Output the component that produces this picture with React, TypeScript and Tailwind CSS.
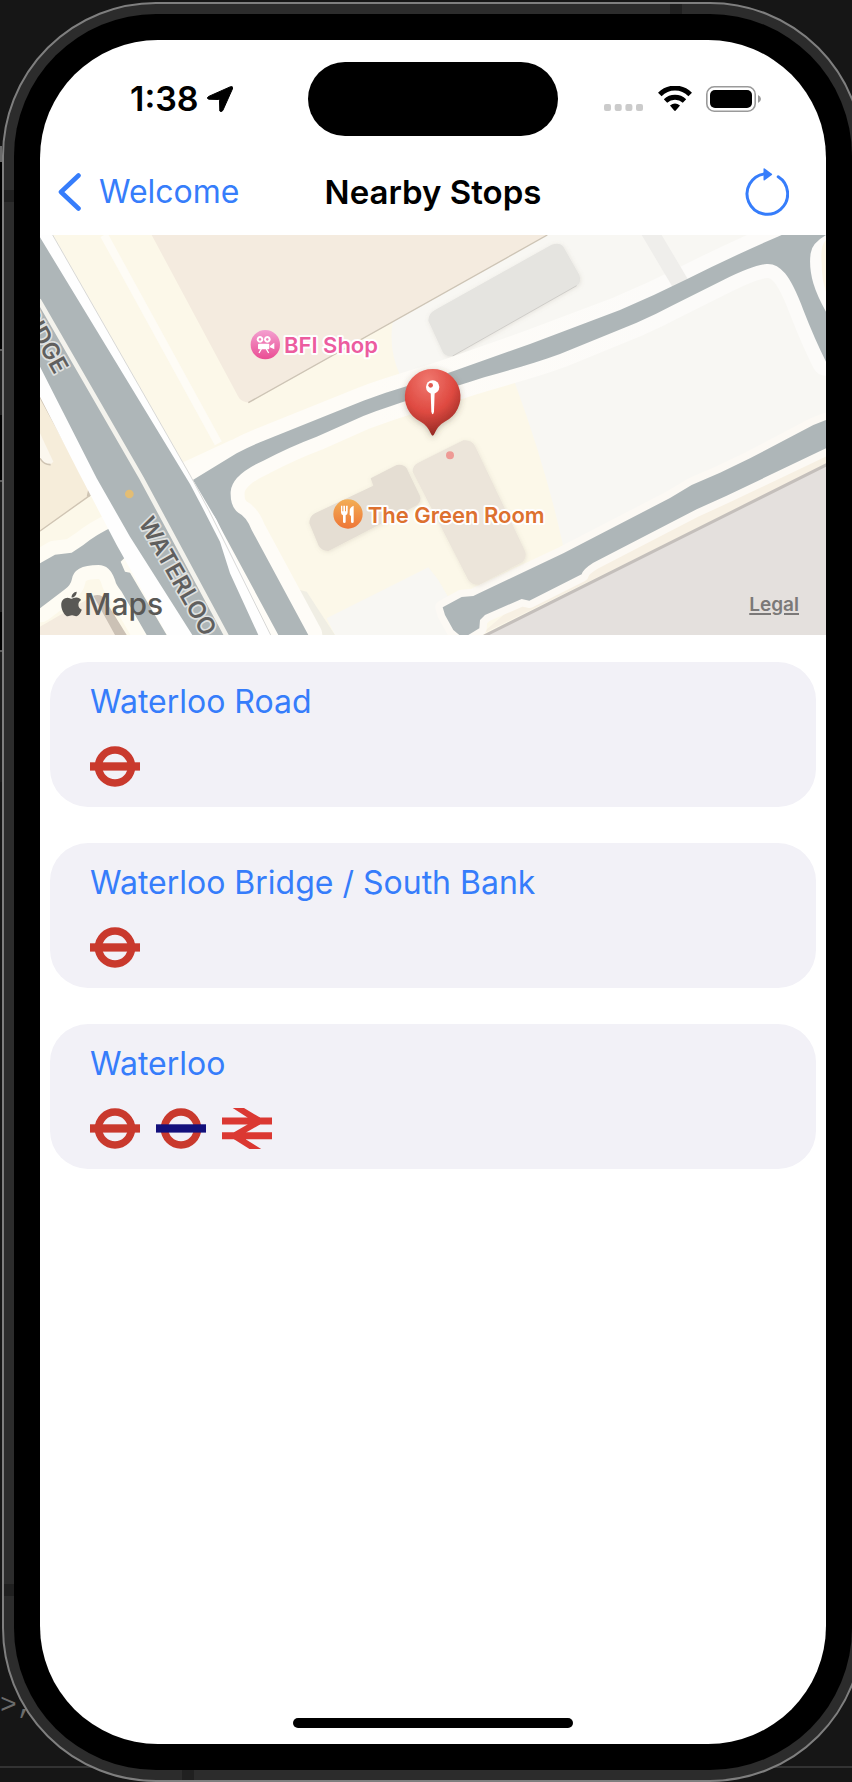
import { FaApple } from "react-icons/fa";

type Mode = "bus" | "tube" | "rail";

const stops: { name: string; modes: Mode[] }[] = [
  { name: "Waterloo Road", modes: ["bus"] },
  { name: "Waterloo Bridge / South Bank", modes: ["bus"] },
  { name: "Waterloo", modes: ["bus", "tube", "rail"] },
];

const modeLabels: Record<Mode, string> = {
  bus: "London Buses",
  tube: "London Underground",
  rail: "National Rail",
};

function ModeIcon({ mode }: { mode: Mode }) {
  return (
    <svg viewBox="0 0 50 41" className="h-[41px] w-[50px]" role="img" aria-label={modeLabels[mode]}>
      {mode === "rail" ? (
        <>
          <path d="M0 9.500h50v7H0zM0 24.300h50v7H0z" fill="#db3832" />
          <path d="M10.700 0H22L38 9.500v7L24 24.500v7L39.200 41H27.500L12 31.300v-7L25.500 16.500v-7z" fill="#db3832" />
        </>
      ) : (
        <>
          <circle cx="25" cy="20.500" r="16.500" fill="none" stroke="#c9392d" strokeWidth="7.500" />
          <rect x="0" y="16.300" width="50" height="8.300" fill={mode === "tube" ? "#13107c" : "#c9392d"} />
        </>
      )}
    </svg>
  );
}

function StatusBar() {
  return (
    <div className="grid grid-cols-[1fr_auto_1fr] items-center pt-[22px]">
      <div className="flex items-center gap-2 pl-[90px]">
        <span className="text-[34px] font-semibold leading-10">1:38</span>
        <svg viewBox="0 0 26 26" className="h-[26px] w-[26px]" aria-hidden="true">
          <path
            d="M1.500 10.500 23.500.700Q26.500 0 25.400 3L15.800 24.500Q14.500 26.500 12.800 25L12.500 14.500Q12.400 13.500 11.500 13.500L1.500 13.200Q-.800 12 1.500 10.500Z"
            fill="black"
            stroke="black"
            strokeWidth="1"
            strokeLinejoin="round"
          />
        </svg>
      </div>
      <div className="h-[74px] w-[250px] rounded-full bg-black" />
      <div className="flex items-center justify-end pr-[65px]">
        <svg viewBox="0 0 40 26" className="mr-[14px] h-[26px] w-[40px]" aria-hidden="true">
          <g fill="#cbcbcb">
            <rect x="0" y="18" width="7" height="7" rx="2" />
            <rect x="10.700" y="18" width="7" height="7" rx="2" />
            <rect x="21.400" y="18" width="7" height="7" rx="2" />
            <rect x="32" y="18" width="7" height="7" rx="2" />
          </g>
        </svg>
        <svg viewBox="0 0 34 26" className="mr-[14px] h-[26px] w-[34px]" aria-hidden="true">
          <path d="M1.800 8.400A21.500 21.500 0 0 1 32.200 8.400" fill="none" stroke="black" strokeWidth="5" />
          <path d="M7.500 15A14 14 0 0 1 26.500 15" fill="none" stroke="black" strokeWidth="5" />
          <path d="M12 19.500Q17 15.500 22 19.500L17.800 24.500Q17 25.300 16.200 24.500Z" fill="black" />
        </svg>
        <svg viewBox="0 0 55 26" className="h-[26px] w-[55px]" aria-hidden="true">
          <rect x=".800" y=".800" width="48.400" height="24.400" rx="7.500" fill="none" stroke="#9a9a9a" strokeWidth="1.600" />
          <rect x="4" y="4" width="42" height="18" rx="5" fill="black" />
          <path d="M52 9Q55 10.500 55 13T52 17Z" fill="#9a9a9a" />
        </svg>
      </div>
    </div>
  );
}

function NavBar() {
  return (
    <header className="mt-3 grid h-[87px] grid-cols-[1fr_auto_1fr] items-center">
      <a href="#welcome" className="flex items-center gap-[17px] pl-[18px] text-[#367dfb]">
        <svg viewBox="0 0 24 38" className="h-[38px] w-[24px]" aria-hidden="true">
          <path d="M20.500 2.500 3 19l17.500 16.500" fill="none" stroke="currentColor" strokeWidth="4.600" strokeLinecap="round" strokeLinejoin="round" />
        </svg>
        <span className="text-[32px] leading-10">Welcome</span>
      </a>
      <h1 className="text-[33px] font-semibold leading-10">Nearby Stops</h1>
      <button type="button" aria-label="Refresh" className="mr-[37px] justify-self-end text-[#367dfb]">
        <svg viewBox="0 0 44 48" className="block h-[48px] w-[44px]" aria-hidden="true">
          <path d="M33.200 8.800A20.300 20.300 0 1 1 20 5.800" fill="none" stroke="currentColor" strokeWidth="3" strokeLinecap="round" />
          <path d="M18.500 1Q18.500-.200 19.700.600L26.800 5.700Q27.600 6.300 26.800 7L19.700 12.200Q18.500 13 18.500 11.800Z" fill="currentColor" />
        </svg>
      </button>
    </header>
  );
}

const junctionRoad =
  "M480 755L620 670Q655 651 690 637L1000 512C1090 478 1180 455 1265 425L1500 342L1770 240Q1870 198 1970 148Q2100 82 2255 15L2388 15Q2345 40 2342 70Q2336 110 2350 160Q2362 200 2388 245L2388 395Q2355 330 2320 240Q2290 160 2265 130Q2240 100 2210 102Q2170 105 2080 150L1930 225Q1880 252 1820 278L1590 372C1490 410 1380 433 1290 465C1200 490 1100 520 1000 558L860 620Q780 650 700 692Q605 735 602 785Q600 830 625 848Q650 860 665 900L835 1215L745 1215L560 872Q545 840 520 838Z";
const westRoad =
  "M30 1000L75 974L125 968L160 945Q200 912 260 885L300 955L292 975L272 995L285 1025L300 1028L410 1215L350 1215L275 1085Q258 1065 255 1050Q240 1005 205 1005Q130 1005 125 1050Q122 1065 105 1078L30 1135Z";
const southRoad =
  "M2388 570L2350 585L2160 685L2070 728L1985 765L1920 804L1600 970L1350 1088L1330 1098L1295 1101L1238 1132L1245 1155L1270 1200L1288 1215L1315 1215L1348 1195L1350 1170L1365 1155L1475 1107L1498 1112L1655 1033Q1658 1018 1690 998L2000 838L2090 797L2388 655Z";

/** Street map drawn in units of a third of a pixel. */
function MapDrawing() {
  return (
    <svg
      viewBox="30 15 2358 1200"
      preserveAspectRatio="xMidYMid slice"
      className="block h-full w-full"
      fontFamily="Inter, 'Liberation Sans', sans-serif"
      role="img"
      aria-label="Map of the streets around Waterloo Bridge"
    >
      <defs>
        <linearGradient id="pink" x1="0" y1="0" x2="0" y2="1">
          <stop offset="0" stopColor="#f3a0d0" />
          <stop offset="1" stopColor="#ea4c93" />
        </linearGradient>
        <linearGradient id="orange" x1="0" y1="0" x2="0" y2="1">
          <stop offset="0" stopColor="#f3ae55" />
          <stop offset="1" stopColor="#ee7637" />
        </linearGradient>
        <linearGradient id="pavement" gradientUnits="userSpaceOnUse" x1="1000" y1="0" x2="1900" y2="0">
          <stop offset="0" stopColor="#fefcf7" />
          <stop offset="1" stopColor="#fcfbf9" />
        </linearGradient>
        <radialGradient id="pin" cx=".42" cy=".18" r=".85">
          <stop offset="0" stopColor="#f0786f" />
          <stop offset=".55" stopColor="#df4a41" />
          <stop offset="1" stopColor="#8e2620" />
        </radialGradient>
        <filter id="shade" x="-30%" y="-30%" width="160%" height="160%">
          <feDropShadow dx="0" dy="5" stdDeviation="9" floodColor="#4d4030" floodOpacity=".35" />
        </filter>
        <filter id="soft" x="-20%" y="-20%" width="140%" height="140%">
          <feDropShadow dx="2" dy="3" stdDeviation="7" floodColor="#8a8070" floodOpacity=".18" />
        </filter>
      </defs>

      {/* ground */}
      <rect x="30" y="15" width="2358" height="1200" fill="#fcf8e9" />
      <path d="M1088 275L1552 15H2388V650L1600 950Q1550 720 1455 460L1500 340L1110 435Q1075 360 1088 275Z" fill="#f8f7f3" />
      <path d="M890 1165L1195 1012L1225 1050L1320 1215H915Z" fill="#f8f7f3" />
      <path d="M790 1075L830 1085L915 1215H870Z" fill="#f0eee4" />
      <path d="M222 15L565 640M455 712L610 640" fill="none" stroke="#fefcf6" strokeWidth="24" />

      {/* north buildings */}
      <path d="M365 15L625 500Q632 515 658 518L1552 15Z" fill="#f4ebdf" />
      <path d="M655 518L1552 15" stroke="#cdc4b5" strokeWidth="4" />
      <path d="M1195 272Q1195 250 1215 240L1565 44Q1590 36 1600 50L1648 135Q1655 158 1640 167L1268 378Q1245 380 1238 365Z" fill="#e5e4e0" filter="url(#soft)" />
      <path d="M1640 167L1268 378" stroke="#cfcdc9" strokeWidth="3" />

      {/* pavements */}
      <path d={junctionRoad} fill="url(#pavement)" stroke="url(#pavement)" strokeWidth="84" strokeLinejoin="round" />
      <path d="M1835 15H1895L1975 150L1930 175Z" fill="#efeeeb" />
      <path d={westRoad} fill="#fefcf4" stroke="#fefcf4" strokeWidth="84" strokeLinejoin="round" />
      <path d="M1350 1215L1450 1130L2388 660V705Z" fill="#f7f0e3" />
      <path d={southRoad} fill="#fcf9f4" stroke="#fcf9f4" strokeWidth="44" strokeLinejoin="round" />
      <path d="M1365 1215L2388 705V1215Z" fill="#e4e0dd" />
      <path d="M1362 1218L2392 703" stroke="#c4bfbb" strokeWidth="9" />
      <path d="M2388 30Q2370 45 2375 100Q2375 150 2388 185Z" fill="#fbf5e5" />

      {/* west buildings */}
      <path d="M30 490L180 770L178 800L30 905Z" fill="#f6edda" />
      <path d="M30 498L180 772L174 800" fill="none" stroke="#cfc4b3" strokeWidth="8" />
      <path d="M30 903L205 778" stroke="#cfc4b3" strokeWidth="4" />
      <path d="M30 610L70 695L60 705Q45 705 30 685Z" fill="#fbf7ee" />
      <path d="M30 685Q42 705 62 704" fill="none" stroke="#cfc4b3" strokeWidth="5" />
      <path d="M30 1190L190 1097Q215 1090 225 1110L290 1215H30Z" fill="#f4ebdf" />
      <path d="M190 1097Q215 1090 225 1110L290 1215H255Z" fill="#cbc1b5" />

      {/* carriageways */}
      <path d={junctionRoad} fill="#aeb6b8" />
      <path d={westRoad} fill="#aeb6b8" />
      <path d={southRoad} fill="#aeb6b8" />

      {/* bridge */}
      <path d="M30 15H68L480 735L560 870L722 1215H412L260 945L150 735L30 500Z" fill="#fefefe" />
      <path d="M68 15L480 735L535 838L722 1215" fill="none" stroke="#d8d8d6" strokeWidth="3" />
      <path d="M30 22L480 762L520 838L570 935L600 1030L685 1215H487L300 920L200 745L30 410Z" fill="#aeb6b8" />
      <path d="M26 210L335 745L592 1222" fill="none" stroke="#f4f3ed" strokeWidth="14" />
      <circle cx="298" cy="792" r="13" fill="#e3bd74" />

      {/* south buildings */}
      <g filter="url(#soft)">
        <path d="M838 880Q838 858 855 850L1030 767L1022 745L1100 705Q1122 702 1130 715L1170 798Q1175 815 1162 825L895 963Q872 962 865 945Z" fill="#e5ded3" />
        <path d="M1148 725Q1148 705 1165 698L1300 631Q1325 628 1336 650L1486 965Q1490 985 1476 997L1348 1064Q1325 1065 1315 1050Z" fill="#ece5da" />
      </g>
      <circle cx="1260" cy="676" r="12" fill="#ee9a95" />

      {/* road names */}
      <g fontSize="71" fontWeight="600" fill="#605f5e" stroke="#dfe1e0" strokeWidth="10" strokeLinejoin="round" paintOrder="stroke">
        <text transform="translate(324 878) rotate(60.500)">WATERLOO</text>
        <text transform="translate(74 436) rotate(61)" textAnchor="end">BRIDGE</text>
      </g>

      {/* places */}
      <g fontSize="66" fontWeight="600" stroke="white" strokeWidth="12" strokeLinejoin="round" paintOrder="stroke">
        <text x="762" y="368" fill="#ec5c9f">BFI Shop</text>
        <text x="1013" y="878" fill="#dd7130">The Green Room</text>
      </g>
      <circle cx="706" cy="344" r="44" fill="url(#pink)" />
      <g fill="white">
        <path fillRule="evenodd" d="M690 318a10 10 0 1 0 .1 0zM690 324a4 4 0 1 1-.1 0zM712 318a10 10 0 1 0 .1 0zM712 324a4 4 0 1 1-.1 0z" />
        <rect x="684" y="341" width="34" height="17" rx="3" />
        <path d="M720 348L733 338V358L720 352Z" />
        <path d="M694 357L687 369M709 357L716 369" stroke="white" strokeWidth="4" />
      </g>
      <circle cx="954" cy="852" r="44" fill="url(#orange)" />
      <path
        d="M933 827h4v17h3v-17h5v17h3v-17h5v20q0 7-6 9v19q0 4-4 4t-4-4v-19q-6-2-6-9zM971 827v48q0 4-4 4t-4-4v-17l-4-3v-12q0-12 12-16z"
        fill="white"
      />

      {/* dropped pin */}
      <path
        d="M1208 417A83 83 0 0 1 1244 575Q1224 586 1214 610Q1208 624 1202 610Q1192 586 1172 575A83 83 0 0 1 1208 417Z"
        fill="url(#pin)"
        filter="url(#shade)"
      />
      <circle cx="1208" cy="471" r="20" fill="white" />
      <path d="M1202 486H1214L1212 545Q1208 560 1204 545Z" fill="white" />
      <circle cx="1202" cy="466" r="7" fill="#e25b52" />
    </svg>
  );
}

function NearbyMap() {
  return (
    <section aria-label="Map" className="relative h-[400px]">
      <MapDrawing />
      <div className="absolute bottom-[11px] left-[20px] flex items-center gap-px text-[#595855]">
        <FaApple className="h-[28px] w-[23px]" aria-hidden="true" />
        <span className="text-[30px] font-medium leading-10">Maps</span>
      </div>
      <a href="#legal" className="absolute bottom-[18px] right-[27px] text-[19px] font-semibold leading-6 text-[#7b7978] underline decoration-2 underline-offset-2">
        Legal
      </a>
    </section>
  );
}

/** Side buttons of the handset, seen as slivers beside its frame. */
function SideButtons() {
  return (
    <div className="flex w-[2px] shrink-0 flex-col" aria-hidden="true">
      <div className="mt-[144px] h-[16px] bg-[#6a6a6a]" />
      <div className="h-[187px] bg-black" />
      <div className="h-[66px] border-t-2 border-[#5a5a5a] bg-[#1d1d1d]" />
      <div className="h-[65px] bg-black" />
      <div className="h-[132px] border-t-2 border-[#5a5a5a] bg-[#1d1d1d]" />
      <div className="h-[38px] bg-black" />
      <div className="h-[132px] border-t-2 border-[#5a5a5a] bg-[#1d1d1d]" />
    </div>
  );
}

export default function App() {
  return (
    <div className="relative flex min-h-screen overflow-hidden bg-[#161616] pt-[2px] font-[Inter,'Liberation_Sans',sans-serif] text-black">
      <div className="absolute inset-x-0 bottom-[14px] h-[2px] bg-[#333333]" aria-hidden="true" />
      <span className="absolute bottom-[60px] left-0 font-['Liberation_Mono',monospace] text-[28px] leading-8 text-[#6b6b6b]">&gt;,</span>
      <SideButtons />
      <div className="relative -mr-3 flex min-w-0 flex-1 rounded-[154px] border-2 border-[#7f7f7f] bg-[#2c2c2c] p-[10px]">
        <div className="absolute left-0 top-[186px] h-3 w-[10px] bg-[#202020]" />
        <div className="absolute bottom-[184px] left-0 h-3 w-[10px] bg-[#202020]" />
        <div className="absolute right-[180px] top-0 h-[10px] w-3 bg-[#202020]" />
        <div className="absolute bottom-0 left-[178px] h-[10px] w-3 bg-[#202020]" />
        <div className="flex min-w-0 flex-1 rounded-[142px] bg-black p-[26px]">
          <div className="flex min-w-0 flex-1 flex-col overflow-hidden rounded-[118px] bg-white">
            <StatusBar />
            <NavBar />
            <NearbyMap />
            <main className="flex-1 px-[10px] pb-10 pt-[27px]">
              <ul className="flex flex-col gap-[36px]">
                {stops.map((stop) => (
                  <li key={stop.name} className="rounded-[38px] bg-[#f2f1f7] px-10 pb-5 pt-5">
                    <a href="#stop" className="block text-[32px] leading-10 text-[#367dfb]">
                      {stop.name}
                    </a>
                    <div className="mt-6 flex gap-4">
                      {stop.modes.map((mode) => (
                        <ModeIcon key={mode} mode={mode} />
                      ))}
                    </div>
                  </li>
                ))}
              </ul>
            </main>
            <div className="mb-4 h-[10px] w-[280px] self-center rounded-full bg-black" />
          </div>
        </div>
      </div>
    </div>
  );
}
